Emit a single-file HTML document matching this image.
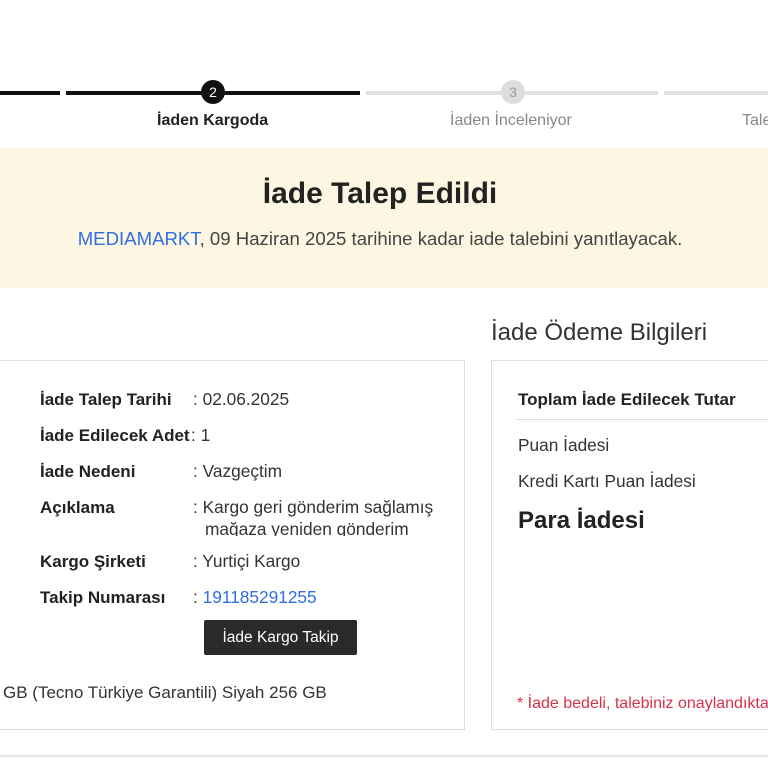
<!DOCTYPE html>
<html><head><meta charset="utf-8"><style>
*{margin:0;padding:0;box-sizing:border-box}
body{width:768px;height:768px;overflow:hidden;background:#fff;font-family:"Liberation Sans","DejaVu Sans",sans-serif;color:#222;position:relative}
.a{position:absolute;white-space:nowrap}
.ln{position:absolute;height:4px;top:91px}
.c{position:absolute;width:24px;height:24px;border-radius:50%;text-align:center;line-height:24px;font-size:14px;top:80px}
.lb{font-size:17px;font-weight:bold;color:#222;margin-top:1px}
.v{font-size:17.3px;color:#333}
</style></head><body>
<div class="ln" style="left:0;width:60px;background:#111"></div>
<div class="ln" style="left:66px;width:294px;background:#111"></div>
<div class="ln" style="left:366px;width:292px;background:#e2e2e2"></div>
<div class="ln" style="left:664px;width:104px;background:#e2e2e2"></div>
<div class="c" style="left:201px;background:#111;color:#fff">2</div>
<div class="c" style="left:501px;background:#ddd;color:#999">3</div>
<div class="a" style="left:157px;top:112px;font-size:16px;font-weight:bold;color:#222">İaden Kargoda</div>
<div class="a" style="left:450px;top:112px;font-size:16px;color:#888">İaden İnceleniyor</div>
<div class="a" style="left:742px;top:112px;font-size:16px;color:#888">Talep</div>
<div class="a" style="left:0;top:148px;width:768px;height:140px;background:#fdf6e3"></div>
<div class="a" style="left:0;top:177px;width:760px;text-align:center;font-size:30px;font-weight:bold;color:#222">İade Talep Edildi</div>
<div class="a" style="left:0;top:228px;width:760px;text-align:center;font-size:18.6px;color:#444"><span style="color:#2f6fe0">MEDIAMARKT</span>, 09 Haziran 2025 tarihine kadar iade talebini yanıtlayacak.</div>
<div class="a" style="left:491px;top:319px;font-size:24px;color:#333">İade Ödeme Bilgileri</div>
<div class="a" style="left:-2px;top:360px;width:467px;height:370px;border:1px solid #ddd"></div>
<div class="a lb" style="left:40px;top:389px">İade Talep Tarihi</div><div class="a v" style="left:193px;top:389px">: 02.06.2025</div>
<div class="a lb" style="left:40px;top:425px">İade Edilecek Adet</div><div class="a v" style="left:191px;top:425px">: 1</div>
<div class="a lb" style="left:40px;top:461px">İade Nedeni</div><div class="a v" style="left:193px;top:461px">: Vazgeçtim</div>
<div class="a lb" style="left:40px;top:497px">Açıklama</div><div class="a v" style="left:193px;top:497px">: Kargo geri gönderim sağlamış</div>
<div class="a v" style="left:205px;top:519px;height:17px;overflow:hidden">mağaza yeniden gönderim</div>
<div class="a lb" style="left:40px;top:551px">Kargo Şirketi</div><div class="a v" style="left:193px;top:551px">: Yurtiçi Kargo</div>
<div class="a lb" style="left:40px;top:587px">Takip Numarası</div><div class="a v" style="left:193px;top:587px">: <span style="color:#2f6fe0">191185291255</span></div>
<div class="a" style="left:204px;top:620px;width:153px;height:35px;background:#2a2a2a;color:#fff;font-size:15.5px;text-align:center;line-height:35px;border-radius:2px">İade Kargo Takip</div>
<div class="a v" style="left:3px;top:683px;font-size:17px">GB (Tecno Türkiye Garantili) Siyah 256 GB</div>
<div class="a" style="left:491px;top:360px;width:290px;height:370px;border:1px solid #ddd"></div>
<div class="a lb" style="left:518px;top:389px">Toplam İade Edilecek Tutar</div>
<div class="a" style="left:517px;top:419px;width:260px;height:1px;background:#ddd"></div>
<div class="a v" style="left:518px;top:435px">Puan İadesi</div>
<div class="a v" style="left:518px;top:471px">Kredi Kartı Puan İadesi</div>
<div class="a" style="left:518px;top:507px;font-size:24px;font-weight:bold;color:#222">Para İadesi</div>
<div class="a" style="left:517px;top:695px;font-size:16px;color:#d9304a">* İade bedeli, talebiniz onaylandıktan</div>
<div class="a" style="left:0;top:755px;width:768px;height:2px;background:#e5e5e5"></div>
</body></html>
